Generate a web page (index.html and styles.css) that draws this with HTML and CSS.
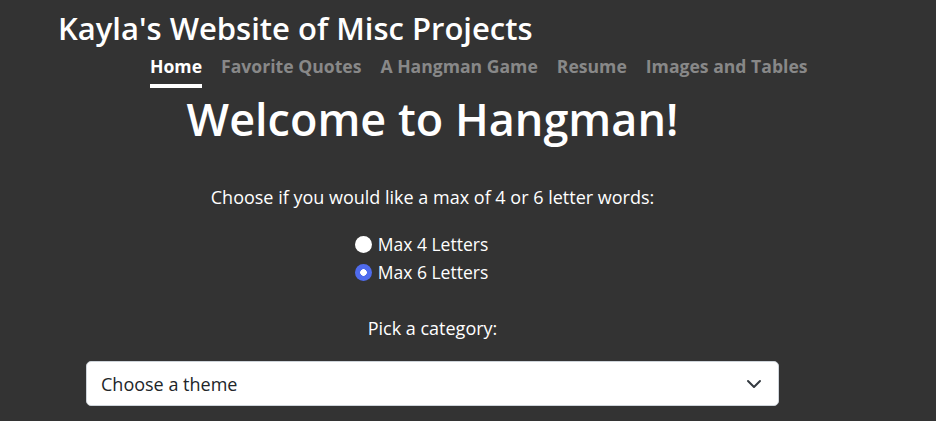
FILE: index.html
```html
<!DOCTYPE html>
<html lang="en">
<head>
<meta charset="utf-8">
<title>Hangman</title>
<link rel="stylesheet" href="styles.css">
</head>
<body>
<div class="page">
  <header class="site-header">
    <h1 class="site-title">Kayla's Website of Misc Projects</h1>
    <nav class="site-nav">
      <a class="nav-link active" href="#">Home</a>
      <a class="nav-link" href="#">Favorite Quotes</a>
      <a class="nav-link" href="#">A Hangman Game</a>
      <a class="nav-link" href="#">Resume</a>
      <a class="nav-link" href="#">Images and Tables</a>
    </nav>
  </header>
  <main class="game">
    <h2 class="game-title">Welcome to Hangman!</h2>
    <p class="prompt">Choose if you would like a max of 4 or 6 letter words:</p>
    <div class="radio-group">
      <label class="radio"><input type="radio" name="max"> Max 4 Letters</label>
      <label class="radio"><input type="radio" name="max" checked> Max 6 Letters</label>
    </div>
    <p class="prompt category">Pick a category:</p>
    <div class="select-wrap">
      <select class="theme-select">
        <option>Choose a theme</option>
      </select>
      <svg class="chevron" width="16" height="16" viewBox="0 0 16 16"><path d="M2 5l6 6 6-6" fill="none" stroke="#343a40" stroke-width="2" stroke-linecap="round" stroke-linejoin="round"/></svg>
    </div>
  </main>
</div>
</body>
</html>
```
FILE: styles.css
```css
html, body {
  margin: 0;
  padding: 0;
  background: #333333;
  color: #ffffff;
  font-family: "Open Sans", "Noto Sans", sans-serif;
}
.page {
  width: 865px;
}
.site-header {
  padding-top: 8px;
}
.site-title {
  margin: 0 0 0 58px;
  font-size: 31px;
  font-weight: 600;
  line-height: 40px;
}
.site-nav {
  display: flex;
  gap: 19px;
  padding-left: 150px;
  margin-top: 6px;
}
.nav-link {
  color: #888888;
  font-weight: 700;
  font-size: 17.6px;
  text-decoration: none;
  line-height: 24px;
  padding-bottom: 6px;
  border-bottom: 4px solid transparent;
}
.nav-link.active {
  color: #ffffff;
  border-bottom-color: #ffffff;
}
.game {
  display: flex;
  flex-direction: column;
  align-items: center;
}
.game-title {
  margin: 0;
  font-size: 45px;
  font-weight: 600;
  line-height: 62px;
}
.prompt {
  margin: 35px 0 0;
  font-size: 18px;
  line-height: 24px;
}
.radio-group {
  display: flex;
  flex-direction: column;
  margin: 21px 22px 0 0;
}
.radio {
  display: flex;
  align-items: center;
  font-size: 17.5px;
  line-height: 28px;
}
.radio input {
  appearance: none;
  width: 17px;
  height: 17px;
  margin: 0 6px 0 0;
  border-radius: 50%;
  background: #ffffff;
}
.radio input:checked {
  background: radial-gradient(circle, #ffffff 0 3px, #4f6bed 3.6px);
}
.category {
  margin-top: 30px;
}
.select-wrap {
  position: relative;
  width: 693px;
  margin-top: 21px;
}
.theme-select {
  appearance: none;
  display: block;
  width: 100%;
  height: 45px;
  padding: 0 14px;
  border: 1px solid #ced4da;
  border-radius: 5px;
  background: #ffffff;
  color: #212529;
  font-family: inherit;
  font-size: 18px;
}
.chevron {
  position: absolute;
  right: 17px;
  top: 15px;
  pointer-events: none;
}
```
